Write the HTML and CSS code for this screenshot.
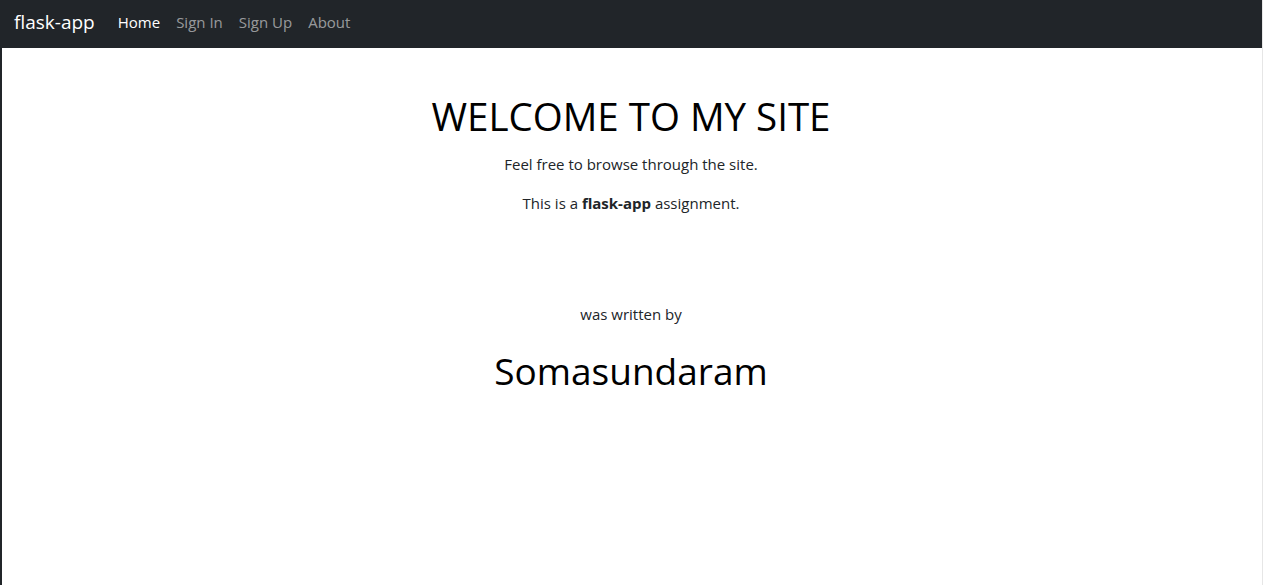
FILE: index.html
```html
<!DOCTYPE html>
<html>
<head>
<meta charset="utf-8">
<link rel="stylesheet" href="styles.css">
</head>
<body>
<div class="frame">
  <nav class="navbar">
    <a class="brand" href="#">flask-app</a>
    <ul class="nav">
      <li><a class="nav-link active" href="#">Home</a></li>
      <li><a class="nav-link" href="#">Sign In</a></li>
      <li><a class="nav-link" href="#">Sign Up</a></li>
      <li><a class="nav-link" href="#">About</a></li>
    </ul>
  </nav>
  <main class="content">
    <h1 class="title">WELCOME TO MY SITE</h1>
    <p class="lead first">Feel free to browse through the site.</p>
    <p class="lead">This is a <b>flask-app</b> assignment.</p>
    <p class="by">was written by</p>
    <h2 class="author">Somasundaram</h2>
  </main>
</div>
</body>
</html>
```
FILE: styles.css
```css
html, body {
  margin: 0;
  padding: 0;
  height: 100%;
}
body {
  font-family: "Open Sans", "Noto Sans", sans-serif;
  font-size: 15px;
  color: #212529;
  background: #fff;
}
.frame {
  min-height: 100%;
  border-left: 2px solid #212529;
  border-right: 1px solid #e6e6e6;
  box-sizing: border-box;
}
.navbar {
  display: flex;
  align-items: center;
  height: 48px;
  box-sizing: border-box;
  padding: 0 12px 4px;
  background: #212529;
}
.brand {
  color: #fff;
  text-decoration: none;
  font-size: 19px;
  margin-right: 23px;
}
.nav {
  display: flex;
  list-style: none;
  margin: 0;
  padding: 0;
  gap: 16px;
}
.nav-link {
  color: rgba(255,255,255,.55);
  text-decoration: none;
  font-size: 15px;
}
.nav-link.active {
  color: #fff;
}
.content {
  text-align: center;
  padding-top: 45px;
  padding-right: 2px;
}
.title {
  font-size: 38.5px;
  font-weight: 400;
  color: #000;
  margin: 0;
  line-height: 1.2;
}
.lead {
  margin: 0 0 16px;
  line-height: 1.5;
}
.lead.first {
  margin-top: 14px;
}
.by {
  margin: 89px 0 0;
  line-height: 1.5;
}
.author {
  font-size: 37px;
  font-weight: 400;
  color: #000;
  margin: 23px 0 0;
  line-height: 1.2;
}
```
